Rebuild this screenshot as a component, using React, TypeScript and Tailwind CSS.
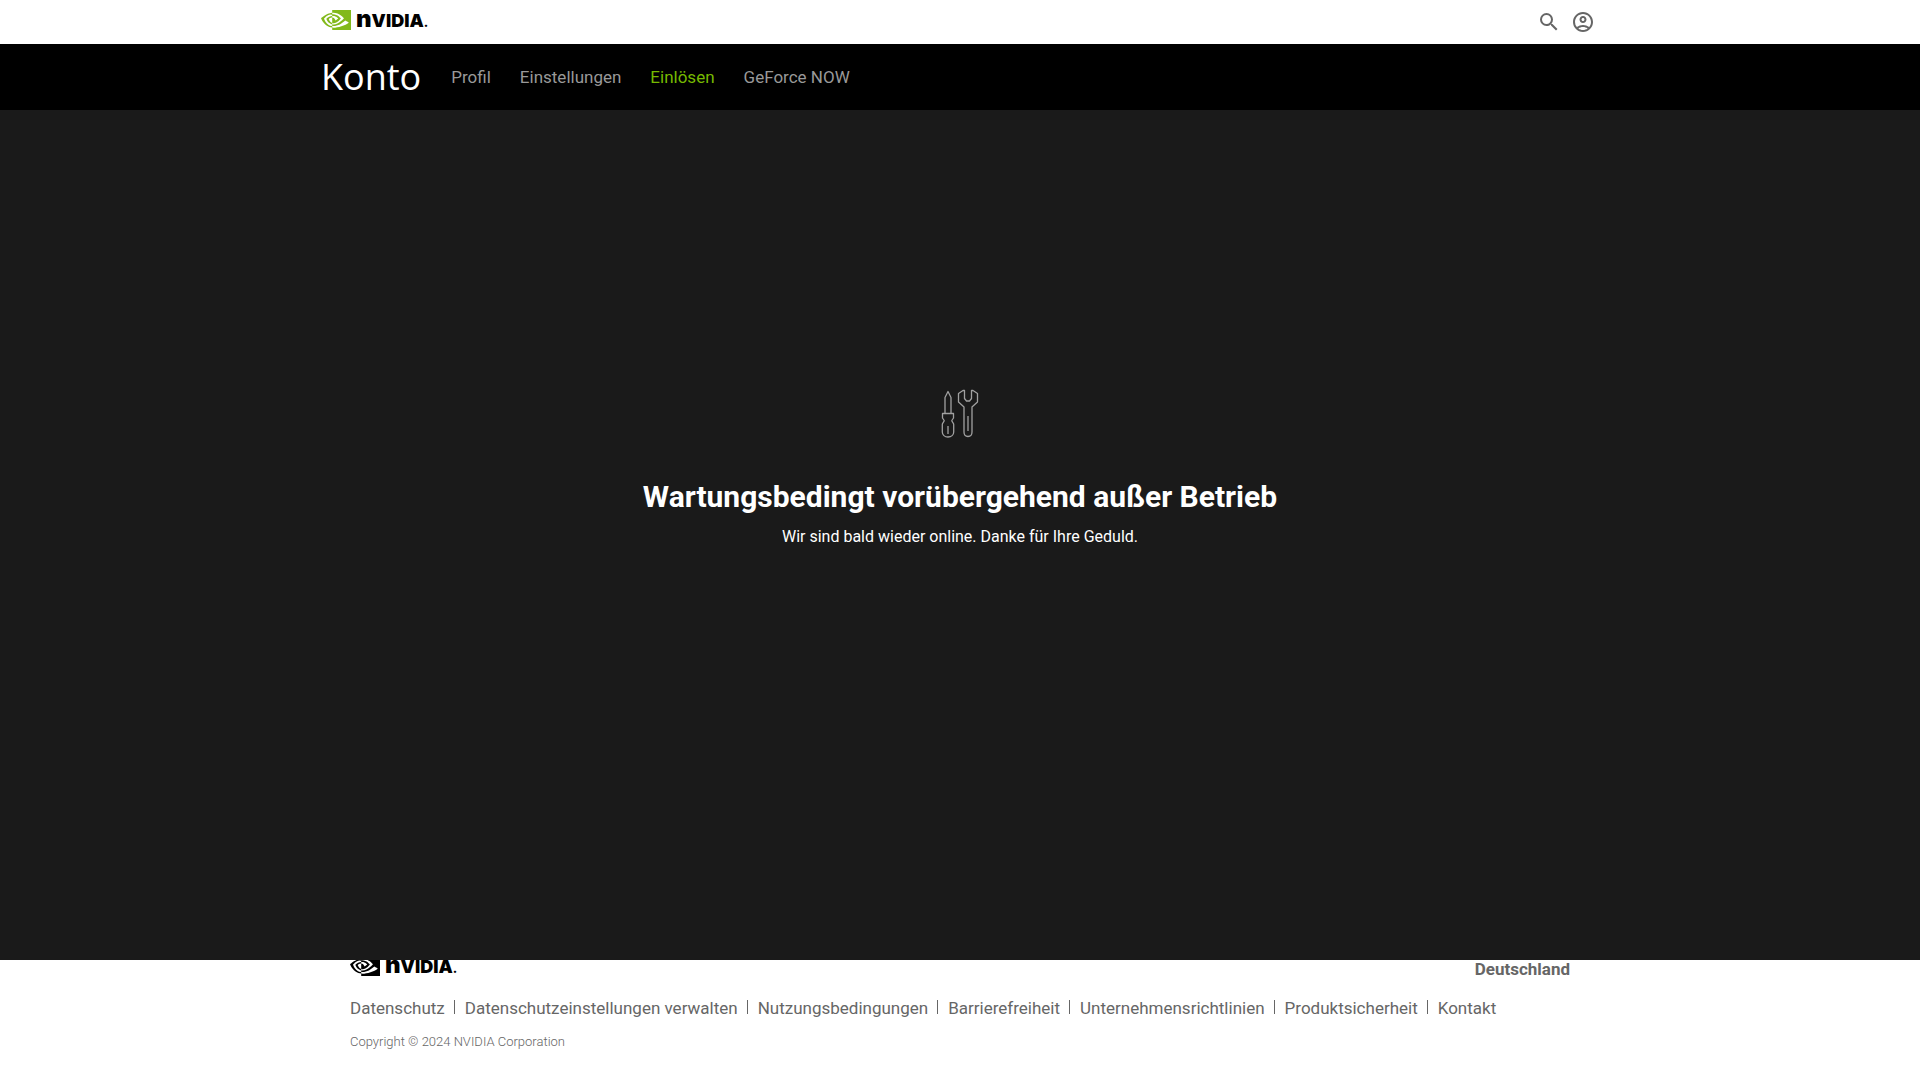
import React from 'react';
import { MdOutlineAccountCircle, MdSearch } from 'react-icons/md';

interface LogoProps {
  eyeClassName: string;
}

const navItems = [
  { label: 'Profil', active: false },
  { label: 'Einstellungen', active: false },
  { label: 'Einlösen', active: true },
  { label: 'GeForce NOW', active: false },
];

const footerLinks = [
  'Datenschutz',
  'Datenschutzeinstellungen verwalten',
  'Nutzungsbedingungen',
  'Barrierefreiheit',
  'Unternehmensrichtlinien',
  'Produktsicherheit',
  'Kontakt',
];

function Logo({ eyeClassName }: LogoProps) {
  return (
    <span className="flex items-center gap-[5px] text-black">
      <svg viewBox="0 4 24 16" className={`w-[30px] h-5 ${eyeClassName}`} fill="currentColor" aria-hidden="true">
        <path d="M8.948 8.798v-1.43a6.7 6.7 0 0 1 .424-.018c3.922-.124 6.493 3.374 6.493 3.374s-2.774 3.851-5.75 3.851c-.398 0-.787-.062-1.158-.185v-4.346c1.528.185 1.837.857 2.747 2.385l2.04-1.714s-1.492-1.952-4-1.952a6.016 6.016 0 0 0-.796.035m0-4.735v2.138l.424-.027c5.45-.185 9.01 4.47 9.01 4.47s-4.08 4.964-8.33 4.964c-.37 0-.733-.035-1.095-.097v1.325c.3.035.61.062.91.062 3.957 0 6.82-2.023 9.593-4.408.459.371 2.34 1.263 2.73 1.652-2.633 2.208-8.772 3.984-12.253 3.984-.335 0-.653-.018-.971-.053v1.864H24V4.063zm0 10.326v1.131c-3.657-.654-4.673-4.46-4.673-4.46s1.758-1.944 4.673-2.262v1.237H8.94c-1.528-.186-2.73 1.245-2.73 1.245s.68 2.412 2.739 3.11M2.456 10.9s2.164-3.197 6.5-3.533V6.201C4.153 6.59 0 10.653 0 10.653s2.35 6.802 8.948 7.42v-1.237c-4.84-.6-6.492-5.936-6.492-5.936z" />
      </svg>
      <span className="h-5 flex items-baseline font-['Inter',sans-serif] font-black text-lg leading-[18px]">
        <span className="text-2xl leading-[18px]">n</span>
        <span>VIDIA</span>
        <span className="text-xs leading-[18px]">.</span>
      </span>
    </span>
  );
}

function ToolsIcon() {
  return (
    <svg width="40" height="50" viewBox="0 0 40 50" fill="none" stroke="#a0a0a0" strokeWidth="1.3" strokeLinejoin="round" aria-hidden="true">
      {/* Screwdriver */}
      <path d="M5 24V8.5L8 2.5l3 6V24" />
      <path d="M2.5 24.5h11v4.5l-1.7 2.5c0 1.5 1.9 2.2 1.9 4V43c0 3-2.4 5-5.7 5s-5.7-2-5.7-5v-7.5c0-1.8 1.9-2.5 1.9-4L2.5 29z" />
      <path d="M8 37v8" />
      {/* Wrench */}
      <path d="M24.5 1.5H23l-4.500 3V13l5.500 5v25c0 2.500 1.500 4.500 4 4.500s4-2 4-4.500V18l5.500-5V4.500l-4.500-3h-1.500v8L29.500 12h-3l-2-2.500z" />
      <path d="M28 27v15" />
    </svg>
  );
}

export default function App() {
  return (
    <div className="min-h-screen flex flex-col bg-white font-['Roboto',sans-serif]">
      {/* Header */}
      <header className="bg-white">
        <div className="max-w-7xl h-11 mx-auto px-px flex items-center justify-between">
          <a href="#" aria-label="NVIDIA" className="pb-1">
            <Logo eyeClassName="text-[#82b91b]" />
          </a>
          <div className="flex items-center gap-2.5 pr-1 text-[#666666]">
            <button type="button" aria-label="Suche">
              <MdSearch className="w-6 h-6" />
            </button>
            <button type="button" aria-label="Konto">
              <MdOutlineAccountCircle className="w-6 h-6" />
            </button>
          </div>
        </div>
      </header>

      {/* Account navigation */}
      <nav className="bg-black">
        <div className="max-w-7xl h-[66px] mx-auto px-px flex items-center">
          <h1 className="text-4xl text-white font-['Open_Sans',sans-serif]">Konto</h1>
          <div className="flex items-center gap-[29px] ml-[30px]">
            {navItems.map((item) => (
              <a
                key={item.label}
                href="#"
                className={`text-[17px] leading-6 ${item.active ? 'text-[#76b900]' : 'text-[#999999]'}`}
              >
                {item.label}
              </a>
            ))}
          </div>
        </div>
      </nav>

      {/* Maintenance notice */}
      <main className="flex-1 bg-[#1a1a1a] flex flex-col items-center text-center text-white pt-[279px]">
        <ToolsIcon />
        <h2 className="mt-10 text-[30px] leading-9 font-bold">Wartungsbedingt vorübergehend außer Betrieb</h2>
        <p className="mt-2.5 text-base leading-6">Wir sind bald wieder online. Danke für Ihre Geduld.</p>
      </main>

      {/* Footer, its logo slides under the notice */}
      <footer className="h-[120px] bg-white overflow-hidden text-[#666666]">
        <div className="max-w-[1220px] mx-auto">
          <div className="h-8 flex items-start justify-between">
            <a href="#" aria-label="NVIDIA" className="-mt-1">
              <Logo eyeClassName="text-black" />
            </a>
            <a href="#" className="text-[17px] leading-[18px] font-bold">Deutschland</a>
          </div>
          <ul className="pt-1 flex flex-wrap">
            {footerLinks.map((label, index) => (
              <li key={label} className="flex items-start text-[17px] leading-6">
                {index > 0 && <span className="w-px h-3.5 mt-1 ml-[9px] mr-2.5 bg-[#666666]" />}
                <a href="#">{label}</a>
              </li>
            ))}
          </ul>
          <p className="mt-3.5 text-[13px] leading-4 font-light">Copyright © 2024 NVIDIA Corporation</p>
        </div>
      </footer>
    </div>
  );
}
